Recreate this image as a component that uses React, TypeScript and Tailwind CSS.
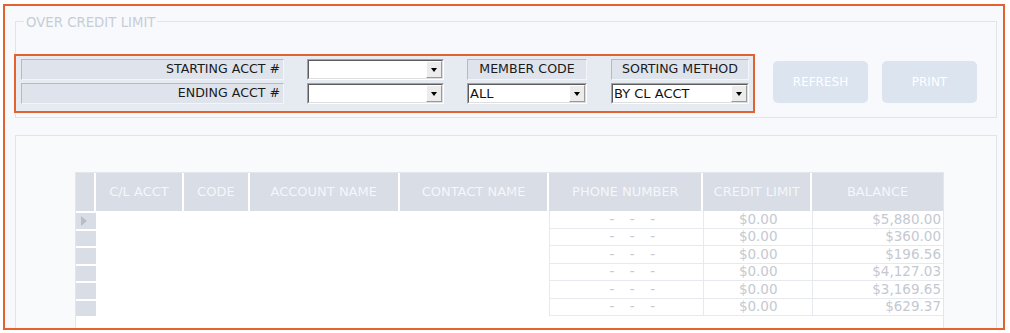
import React from 'react';

const font = { fontFamily: '"DejaVu Sans", Verdana, sans-serif' };

const columns = [
  { key: 'acct', label: 'C/L ACCT', w: 'w-[88px]' },
  { key: 'code', label: 'CODE', w: 'w-[66px]' },
  { key: 'name', label: 'ACCOUNT NAME', w: 'w-[150px]' },
  { key: 'contact', label: 'CONTACT NAME', w: 'w-[150px]' },
  { key: 'phone', label: 'PHONE NUMBER', w: 'w-[154px]' },
  { key: 'limit', label: 'CREDIT LIMIT', w: 'w-[109px]' },
  { key: 'balance', label: 'BALANCE', w: 'w-[131px]' },
];

const rows = ['$5,880.00', '$360.00', '$196.56', '$4,127.03', '$3,169.65', '$629.37'];

function Combo({ value = '', w }: { value?: string; w: string }) {
  return (
    <div className={`${w} h-[21px] border border-t-[#a3a3a3] border-l-[#a3a3a3] border-r-white border-b-white`}>
      <div className="flex h-full bg-white border border-t-[#5c5c5c] border-l-[#5c5c5c] border-r-[#dedede] border-b-[#dedede]">
        <div className="flex-1 pl-[1px] text-[13px] leading-[17px] text-[#111] whitespace-nowrap overflow-hidden">{value}</div>
        <div className="w-[16px] h-full flex items-center justify-center bg-[#ececec] border border-t-white border-l-white border-r-[#9a9a9a] border-b-[#9a9a9a]">
          <div className="w-0 h-0 border-l-[3.5px] border-r-[3.5px] border-t-[4px] border-l-transparent border-r-transparent border-t-black mt-[1px]" />
        </div>
      </div>
    </div>
  );
}

function Label({ text, w, align = 'right' }: { text: string; w: string; align?: 'right' | 'center' }) {
  return (
    <div
      className={`${w} h-[21px] flex items-center ${align === 'right' ? 'justify-end pr-[3px]' : 'justify-center'} bg-[#dfe4ec] border border-t-[#b4bac3] border-l-[#b4bac3] border-r-[#f3f5f8] border-b-[#f3f5f8] text-[12.6px] text-[#1b1b1b] whitespace-nowrap`}
    >
      {text}
    </div>
  );
}

export default function App() {
  return (
    <div className="w-[1010px] h-[333px] bg-white pt-[4px] pl-[3px]" style={font}>
      <div className="w-[1002px] h-[326px] border-2 border-[#e2632d] bg-[#f7f9fc] overflow-hidden pt-[15px] pl-[10px]">
        {/* filter group */}
        <div className="relative w-[982px] h-[97px] border border-[#e1e5ea]">
          <span className="absolute -top-[8px] left-[8px] px-[2px] bg-[#f7f9fc] text-[13.3px] leading-[18px] text-[#c8cdd5]">
            OVER CREDIT LIMIT
          </span>
          <div className="flex items-start mt-[32px] -ml-[2px]">
            <div className="w-[741px] h-[59px] border-2 border-[#e2632d] bg-[#e6ebf2] flex pl-[5px] pt-[3px]">
              <div className="flex flex-col gap-[3px]">
                <Label text="STARTING ACCT #" w="w-[263px]" />
                <Label text="ENDING ACCT #" w="w-[263px]" />
              </div>
              <div className="flex flex-col gap-[3px] ml-[23px]">
                <Combo w="w-[137px]" />
                <Combo w="w-[137px]" />
              </div>
              <div className="flex flex-col gap-[3px] ml-[23px]">
                <Label text="MEMBER CODE" w="w-[120px]" align="center" />
                <Combo value="ALL" w="w-[120px]" />
              </div>
              <div className="flex flex-col gap-[3px] ml-[24px]">
                <Label text="SORTING METHOD" w="w-[138px]" align="center" />
                <Combo value="BY CL ACCT" w="w-[138px]" />
              </div>
            </div>
            <div className="flex gap-[14px] ml-[18px] mt-[7px]">
              <button className="w-[95px] h-[42px] rounded-[5px] bg-[#dbe4ef] text-white text-[12px]">REFRESH</button>
              <button className="w-[95px] h-[42px] rounded-[5px] bg-[#dbe4ef] text-white text-[12px]">PRINT</button>
            </div>
          </div>
        </div>

        {/* results panel */}
        <div className="w-[982px] h-[220px] mt-[17px] border border-[#e1e5ea] bg-[#f8fafc] pt-[36px] pl-[59px]">
          <div className="w-[869px] h-[200px] bg-white border-t border-l border-r border-[#e3e6ea]">
            <div className="flex h-[38px]">
              <div className="w-[20px] h-full bg-[#d8dde6] border-r-2 border-white" />
              {columns.map((c, i) => (
                <div
                  key={c.key}
                  className={`${c.w} h-full flex items-center justify-center bg-[#d8dde6] text-[13px] text-[#f5f7fa] whitespace-nowrap ${i < columns.length - 1 ? 'border-r-2 border-white' : ''}`}
                >
                  {c.label}
                </div>
              ))}
            </div>
            {rows.map((bal, i) => (
              <div key={i} className="flex h-[17.5px] text-[13.5px] text-[#c4c9d1]">
                <div className="w-[20px] h-full bg-[#d8dde6] border-t-2 border-white flex items-center pl-[5px]">
                  {i === 0 && (
                    <div className="w-0 h-0 border-t-[5px] border-b-[5px] border-l-[6px] border-t-transparent border-b-transparent border-l-[#b9bec6]" />
                  )}
                </div>
                <div className="w-[454px] h-full" />
                <div className="w-[154px] h-full border-l border-b border-[#e6e9ee] flex items-center gap-[15.5px] pl-[59px] leading-none">
                  <span>-</span>
                  <span>-</span>
                  <span>-</span>
                </div>
                <div className="w-[109px] h-full border-l border-b border-[#e6e9ee] flex items-center justify-center leading-none">
                  $0.00
                </div>
                <div className="w-[131px] h-full border-l border-b border-[#e6e9ee] flex items-center justify-end pr-[2px] leading-none">
                  {bal}
                </div>
              </div>
            ))}
          </div>
        </div>
      </div>
    </div>
  );
}
